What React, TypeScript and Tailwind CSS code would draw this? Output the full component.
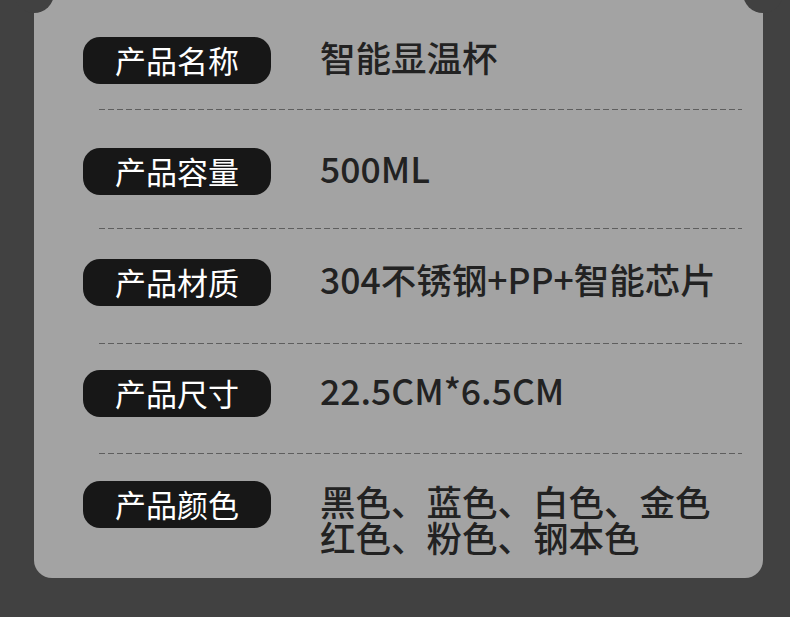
import React from "react";

type Spec = {
  label: string;
  lines: string[];
  // gap from the pill to the dashed rule, then from the rule to the next row
  ruleTop?: string;
  ruleBottom?: string;
};

const specs: Spec[] = [
  { label: "产品名称", lines: ["智能显温杯"], ruleTop: "mt-[25px]", ruleBottom: "mb-[38px]" },
  { label: "产品容量", lines: ["500ML"], ruleTop: "mt-[33px]", ruleBottom: "mb-[30px]" },
  { label: "产品材质", lines: ["304不锈钢+PP+智能芯片"], ruleTop: "mt-[37px]", ruleBottom: "mb-[26px]" },
  { label: "产品尺寸", lines: ["22.5CM*6.5CM"], ruleTop: "mt-[36px]", ruleBottom: "mb-[27px]" },
  { label: "产品颜色", lines: ["黑色、蓝色、白色、金色", "红色、粉色、钢本色"] },
];

const font = { fontFamily: '"Noto Sans CJK SC", "Noto Sans", sans-serif' };

function Row({ spec }: { spec: Spec }) {
  return (
    <>
      <div className="flex items-start pl-[49px]">
        <div className="w-[188px] h-[47px] shrink-0 rounded-[17px] bg-[#171717] flex items-center justify-center pb-[3px]">
          <span className="text-white text-[31px] leading-none font-normal">{spec.label}</span>
        </div>
        <div className="ml-[49px] mt-[2px] text-[#222222] text-[35.5px] leading-[35.5px] font-medium">
          {spec.lines.map((l) => (
            <div key={l} className="whitespace-nowrap">
              {l}
            </div>
          ))}
        </div>
      </div>
      {spec.ruleTop && (
        <div
          className={`ml-[65px] w-[643px] h-px bg-[repeating-linear-gradient(90deg,#5e5e5e_0_6px,transparent_6px_9px)] ${spec.ruleTop} ${spec.ruleBottom}`}
        />
      )}
    </>
  );
}

export default function App() {
  return (
    <div className="relative w-[790px] h-[617px] overflow-hidden bg-[#414141]" style={font}>
      <div className="ml-[34px] w-[729px] h-[578px] bg-[#a3a3a3] rounded-b-[18px] pt-[37px] flex flex-col">
        {specs.map((s) => (
          <Row key={s.label} spec={s} />
        ))}
      </div>
      {/* rounded notches where the panel above meets this one */}
      <div className="absolute left-[14px] top-[-27px] w-[40px] h-[40px] rounded-full bg-[#414141]" />
      <div className="absolute left-[743px] top-[-27px] w-[40px] h-[40px] rounded-full bg-[#414141]" />
    </div>
  );
}
